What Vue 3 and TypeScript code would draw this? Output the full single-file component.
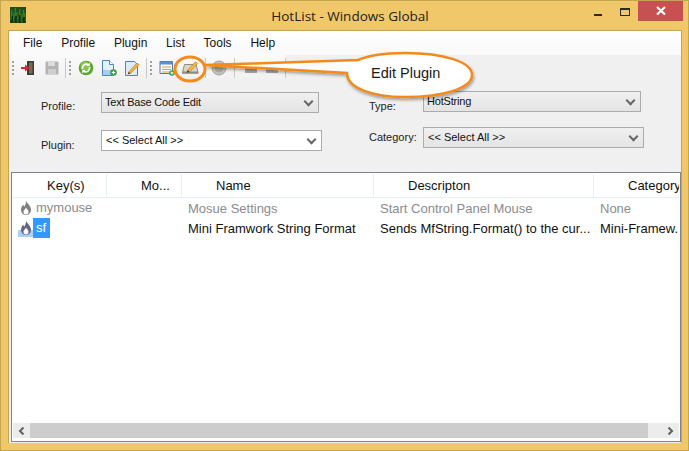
<script setup lang="ts">
const menus = ['File', 'Profile', 'Plugin', 'List', 'Tools', 'Help']

const columns = [
  { name: 'Key(s)', cls: 'col-key' },
  { name: 'Mo...', cls: 'col-mod' },
  { name: 'Name', cls: 'col-name' },
  { name: 'Descripton', cls: 'col-desc' },
  { name: 'Category', cls: 'col-cat' }
]

const rows = [
  {
    key: 'mymouse',
    name: 'Mosue Settings',
    desc: 'Start Control Panel Mouse',
    cat: 'None',
    off: true
  },
  {
    key: 'sf',
    name: 'Mini Framwork String Format',
    desc: 'Sends MfString.Format() to the cur...',
    cat: 'Mini-Framew.',
    off: false
  }
]
</script>

<template>
  <div class="window">
    <header class="titlebar">
      <svg class="app-icon" width="16" height="16" viewBox="0 0 16 16">
        <rect width="16" height="16" fill="#1f4f1a" />
        <path d="M1 13 2 3M3 15 4 6M5 11 5.500 1M7 15 7 5M9 12 10 2M11 15 11 7M13 11 13.500 3M15 14 14.500 6" stroke="#3f8a2c" stroke-width="1" />
        <path d="M2 16 2.500 9M6 16 6 9M10 16 9.500 8M14 16 14 10" stroke="#0f2c0f" stroke-width="1.500" />
      </svg>
      <div class="title">HotList - Windows Global</div>
      <div class="win-btns">
        <span class="btn-min"></span>
        <span class="btn-max"></span>
        <span class="btn-close">
          <svg width="10" height="10" viewBox="0 0 10 10">
            <path d="M1 1 9 8.500M9 1 1 8.500" stroke="#fff" stroke-width="2.200" />
          </svg>
        </span>
      </div>
    </header>

    <main class="client">
      <nav class="menubar">
        <span v-for="m in menus" :key="m" class="menu-item">{{ m }}</span>
      </nav>

      <div class="toolbar">
        <div class="strip">
          <i class="grip first"></i>
          <div class="group wide-gap">
            <svg class="tool" viewBox="0 0 16 16">
              <path d="M7 1h7v14H7z" fill="#3b3a34" />
              <path d="M9 2.500h3.500v11H9z" fill="#7b6a52" />
              <path d="M1 7h4V4.500L9.500 8 5 11.500V9H1z" fill="#e8202a" />
            </svg>
            <svg class="tool" viewBox="0 0 16 16">
              <path d="M1.500 1.500h12l1 1v12h-13z" fill="#b4b4b4" />
              <path d="M4 2h7v4H4z" fill="#dcdcdc" />
              <path d="M4 9h8v5H4z" fill="#cfcfcf" />
            </svg>
          </div>
          <i class="sep s1"></i>
          <i class="grip"></i>
          <div class="group">
            <svg class="tool" viewBox="0 0 16 16">
              <circle cx="8" cy="8" r="7.300" fill="#58a82c" />
              <circle cx="7" cy="6" r="4.500" fill="#9dd65f" opacity=".7" />
              <path d="M4.500 9a4 4 0 0 1 6-4.300M11.500 7a4 4 0 0 1-6 4.300" stroke="#fff" stroke-width="1.700" fill="none" />
              <path d="M11.800 2.500v3.600H8.400zM4.200 13.500V9.900h3.400z" fill="#fff" />
            </svg>
            <svg class="tool" viewBox="0 0 16 16">
              <path d="M1.500 .5h7l4 4v11h-11z" fill="#e4f0fb" stroke="#4a86c5" />
              <path d="M2 10h10v5H2z" fill="#a9cdf0" />
              <path d="M8.500 .5v4h4" fill="#fff" stroke="#4a86c5" />
              <circle cx="12.500" cy="12.500" r="3.300" fill="#3d9a45" />
              <path d="M10.700 12.500h3.600M12.500 10.700v3.600" stroke="#fff" stroke-width="1.200" />
            </svg>
            <svg class="tool" viewBox="0 0 16 16">
              <path d="M1.500 1.500h9l3 3v11h-12z" fill="#dcebfa" stroke="#4a86c5" />
              <path d="M5 11.500 13 3l2 1.800-8 8.200-2.800.8z" fill="#f2b33a" stroke="#b9791c" stroke-width=".6" />
              <path d="M3.800 14.200l1-2.300 1.800 1.500z" fill="#453a2c" />
            </svg>
          </div>
          <i class="sep s2"></i>
          <i class="grip"></i>
          <svg class="tool" viewBox="0 0 16 16">
            <path d="M1 1.500h12.500v12H1z" fill="#f5f8fc" stroke="#4a79ad" />
            <path d="M1 1.500h12.500v3H1z" fill="#5d8fc8" />
            <path d="M3 7h9M3 9.500h9M3 12h7" stroke="#e2a23c" />
            <circle cx="13" cy="13" r="2.800" fill="#3d9a45" />
            <path d="M11.500 13h3M13 11.500v3" stroke="#fff" />
          </svg>
          <svg class="tool edit-tool" viewBox="0 0 18 16">
            <path d="M3.500 4.500h11.500l2 7.500H1.500z" fill="#d8d5cb" stroke="#85837a" stroke-width=".9" />
            <path d="M1 12h16.500v1.800H1z" fill="#8f8d86" />
            <path d="M7 9.800 14.500 1.800l2 1.800-7.500 8-2.800.8z" fill="#f4b942" stroke="#b9791c" stroke-width=".7" />
            <path d="M5.600 12.800l1.100-2.700 2 1.900z" fill="#5a4630" />
          </svg>
          <i class="sep s3"></i>
          <svg class="tool round" viewBox="0 0 16 16">
            <circle cx="8" cy="8" r="7" fill="#c4c4c4" stroke="#a2a2a2" />
            <circle cx="8" cy="8" r="4.500" fill="#a8a8a8" />
          </svg>
          <i class="sep s4"></i>
          <span class="tool-dim d1"></span>
          <span class="tool-dim d2"></span>
          <i class="sep s5"></i>
        </div>
      </div>

      <section class="filters">
        <div class="filter-col left">
          <div class="field">
            <label>Profile:</label>
            <div class="combo flat">Text Base Code Edit<span class="chev"></span></div>
          </div>
          <div class="field second">
            <label>Plugin:</label>
            <div class="combo white wide">&lt;&lt; Select All &gt;&gt;<span class="chev"></span></div>
          </div>
        </div>
        <div class="filter-col right">
          <div class="field">
            <label>Type:</label>
            <div class="combo flat">HotString<span class="chev"></span></div>
          </div>
          <div class="field second">
            <label>Category:</label>
            <div class="combo flat wide">&lt;&lt; Select All &gt;&gt;<span class="chev"></span></div>
          </div>
        </div>
      </section>

      <section class="list">
        <div class="list-head">
          <div v-for="c in columns" :key="c.name" class="head-cell" :class="c.cls">{{ c.name }}</div>
        </div>
        <div class="list-body">
          <div v-for="r in rows" :key="r.key" class="row" :class="{ off: r.off }">
            <div class="cell col-key key-cell">
              <span class="flame" :class="{ picked: !r.off }">
                <svg width="12" height="16" viewBox="0 0 12 16">
                  <path
                    d="M6 .5c.6 2.800 5 5 5 9.300A5 5 0 0 1 6 15 5 5 0 0 1 1 9.800C1 7.500 2.400 6 3.100 4.500c.4 1 .7 1.700 1.300 2.200C5.200 5 6.300 3 6 .5z"
                    :fill="r.off ? '#7f7f7f' : '#66667f'"
                  />
                  <path d="M6 7.500c.5 1.500 2.600 2.400 2.600 4.500A2.600 2.600 0 0 1 6 14.500 2.600 2.600 0 0 1 3.400 12c0-1.900 2-2.700 2.600-4.500z" fill="#fff" />
                </svg>
              </span>
              <span class="key-text" :class="{ selected: !r.off }">{{ r.key }}</span>
            </div>
            <div class="cell col-mod"></div>
            <div class="cell col-name">{{ r.name }}</div>
            <div class="cell col-desc">{{ r.desc }}</div>
            <div class="cell col-cat">{{ r.cat }}</div>
          </div>
        </div>
        <div class="hscroll">
          <span class="arrow">
            <svg width="7" height="8" viewBox="0 0 7 8"><path d="M5.500 .5 2 4l3.500 3.500" fill="none" stroke="#606060" stroke-width="2" /></svg>
          </span>
          <span class="track"></span>
          <span class="arrow end">
            <svg width="7" height="8" viewBox="0 0 7 8"><path d="M1.500 .5 5 4 1.500 7.500" fill="none" stroke="#606060" stroke-width="2" /></svg>
          </span>
        </div>
      </section>
    </main>

    <!-- annotation drawn over the screenshot -->
    <svg class="callout" width="689" height="110" viewBox="0 0 689 110">
      <defs>
        <filter id="soft" x="-10%" y="-20%" width="125%" height="150%">
          <feDropShadow dx="1" dy="2" stdDeviation="1.500" flood-color="#000" flood-opacity=".35" />
        </filter>
      </defs>
      <path
        d="M205 65 358 60C372 54 387 53 405 53 444 53 472 62 472 75 472 88 444 97 405 97 372 97 347 88 347 73z"
        fill="#fff"
        stroke="#f58a1f"
        stroke-width="2.500"
        filter="url(#soft)"
      />
      <ellipse cx="190" cy="69" rx="15" ry="12" fill="none" stroke="#f58a1f" stroke-width="3" />
      <text x="371" y="78" class="callout-text">Edit Plugin</text>
    </svg>
  </div>
</template>

<style scoped>
.window {
  position: relative;
  width: 689px;
  height: 451px;
  box-sizing: border-box;
  border: 1px solid #c6a552;
  background: #f0c869;
  padding: 0 6px 7px 7px;
  display: flex;
  flex-direction: column;
  font-family: 'Liberation Sans', Arial, sans-serif;
  overflow: hidden;
}
.titlebar {
  position: relative;
  height: 29px;
  flex: none;
  display: flex;
  align-items: flex-start;
  justify-content: center;
}
.app-icon {
  position: absolute;
  left: 2px;
  top: 6px;
}
.title {
  font-family: 'Open Sans', sans-serif;
  font-size: 13.500px;
  line-height: 20px;
  margin: 5px 0 0 10px;
  color: #222;
}
.win-btns {
  position: absolute;
  top: 0;
  right: -1px;
  display: flex;
  align-items: flex-start;
}
.btn-min {
  width: 8px;
  height: 2px;
  margin-top: 13px;
  margin-right: 18px;
  background: #2a2a2a;
}
.btn-max {
  box-sizing: border-box;
  width: 10px;
  height: 8px;
  margin-top: 7px;
  margin-right: 8px;
  border: 1px solid #2a2a2a;
  border-top-width: 2px;
}
.btn-close {
  width: 45px;
  height: 20px;
  background: #c75050;
  display: flex;
  align-items: center;
  justify-content: center;
}
.client {
  flex: 1;
  min-height: 0;
  display: flex;
  flex-direction: column;
  background: #f0f0f0;
  border: 1px solid #c6a552;
  border-bottom-width: 0;
}
.menubar {
  height: 24px;
  flex: none;
  display: flex;
  align-items: center;
  padding-left: 14px;
  gap: 18.800px;
  font-size: 12px;
  color: #111;
  background: linear-gradient(#fff, #f9f9f9);
}
.toolbar {
  height: 25px;
  flex: none;
  background: #f0f0f0;
}
.strip {
  width: 275px;
  height: 25px;
  margin-left: 2px;
  display: flex;
  align-items: center;
  background: linear-gradient(#fafafa, #f1f1f1);
  border-radius: 3px;
}
.group {
  display: flex;
  gap: 7px;
}
.group.wide-gap {
  gap: 8px;
}
.grip {
  width: 2px;
  height: 14px;
  margin: 0 7px 0 3px;
  background: repeating-linear-gradient(#a0a0a0 0 2px, transparent 2px 4px);
}
.grip.first {
  margin: 0 6px 0 1px;
}
.tool {
  width: 16px;
  height: 16px;
  flex: none;
}
.edit-tool {
  width: 18px;
  margin-left: 6px;
}
.round {
  margin-left: 5px;
}
.sep {
  width: 1px;
  height: 20px;
  background: #c8c8c8;
}
.s1 { margin-left: 5px; }
.s2 { margin-left: 6px; }
.s3 { margin-left: 6px; }
.s4 { margin-left: 7px; }
.s5 { margin-left: 7px; }
.tool-dim {
  width: 12px;
  height: 6px;
  margin-top: 5px;
  background: #a8a8a8;
}
.d1 { margin-left: 10px; }
.d2 { margin-left: 9px; }
.filters {
  height: 92px;
  flex: none;
  display: flex;
  box-sizing: border-box;
  padding-left: 32px;
}
.filter-col {
  display: flex;
  flex-direction: column;
}
.filter-col.left {
  width: 328px;
  padding-top: 12px;
}
.filter-col.right {
  padding-top: 11px;
}
.field {
  display: flex;
  align-items: flex-start;
}
.field label {
  width: 60px;
  padding-top: 7px;
  font-size: 11px;
  line-height: 14px;
  color: #222;
}
.left .second {
  margin-top: 17px;
}
.left .second label {
  padding-top: 8px;
}
.right .second {
  margin-top: 14px;
}
.right .field label {
  width: 54px;
  padding-top: 8px;
}
.right .second label {
  padding-top: 3px;
}
.combo {
  position: relative;
  box-sizing: border-box;
  width: 218px;
  height: 21px;
  border: 1px solid #acacac;
  font-size: 11px;
  line-height: 19px;
  letter-spacing: -.2px;
  padding-left: 3px;
  color: #111;
  background: linear-gradient(#f0f0f0, #e4e4e4);
}
.combo.wide {
  width: 221px;
  letter-spacing: 0;
  padding-left: 4px;
}
.combo.white {
  background: #fff;
}
.chev {
  position: absolute;
  right: 6px;
  top: 5px;
  width: 5px;
  height: 5px;
  border-right: 2px solid #666;
  border-bottom: 2px solid #666;
  transform: rotate(45deg);
}
.list {
  flex: 1;
  min-height: 0;
  margin: 0 0 1px 2px;
  display: flex;
  flex-direction: column;
  background: #fff;
  border: 1px solid #82828c;
  padding: 1px 1px 3px 1px;
}
.list-head {
  height: 24px;
  flex: none;
  display: flex;
  box-sizing: border-box;
  border-bottom: 1px solid #e5effa;
}
.head-cell {
  box-sizing: border-box;
  font-size: 13px;
  line-height: 24px;
  color: #111;
  padding-left: 34px;
  border-right: 1px solid #e5effa;
  white-space: nowrap;
  overflow: hidden;
}
.col-key { width: 94px; flex: none; }
.col-mod { width: 75px; flex: none; }
.col-name { width: 192px; flex: none; }
.col-desc { width: 220px; flex: none; }
.col-cat { flex: 1; min-width: 0; }
.head-cell.col-cat { border-right: 0; }
.list-body {
  flex: 1;
  min-height: 0;
}
.row {
  height: 20px;
  display: flex;
  align-items: center;
  font-size: 13px;
  color: #111;
  white-space: nowrap;
}
.row.off {
  color: #8c8c8c;
}
.cell {
  box-sizing: border-box;
  overflow: hidden;
}
.col-name.cell, .col-desc.cell, .col-cat.cell {
  padding-left: 6px;
}
.key-cell {
  display: flex;
  align-items: center;
  padding-left: 5px;
}
.flame {
  width: 15px;
  height: 18px;
  display: flex;
  align-items: center;
  justify-content: center;
}
.flame.picked {
  background: linear-gradient(transparent 60%, #a9d0f5 60%);
}
.key-text {
  padding: 0 3px;
  line-height: 20px;
}
.key-text.selected {
  background: #3399ff;
  color: #fff;
  padding: 0 4px 0 3px;
}
.hscroll {
  height: 15px;
  flex: none;
  display: flex;
  background: #ececec;
}
.arrow {
  width: 17px;
  flex: none;
  display: flex;
  align-items: center;
  justify-content: center;
}
.arrow.end {
  width: 31px;
  justify-content: flex-end;
  padding-right: 5px;
  box-sizing: border-box;
}
.track {
  flex: 1;
  background: #cdcdcd;
}
.callout {
  position: absolute;
  left: -1px;
  top: -1px;
  pointer-events: none;
}
.callout-text {
  font-family: 'Liberation Sans', Arial, sans-serif;
  font-size: 14.500px;
  fill: #1a1a1a;
}
</style>

<style>
html, body {
  margin: 0;
  background: #f0c869;
}
</style>
